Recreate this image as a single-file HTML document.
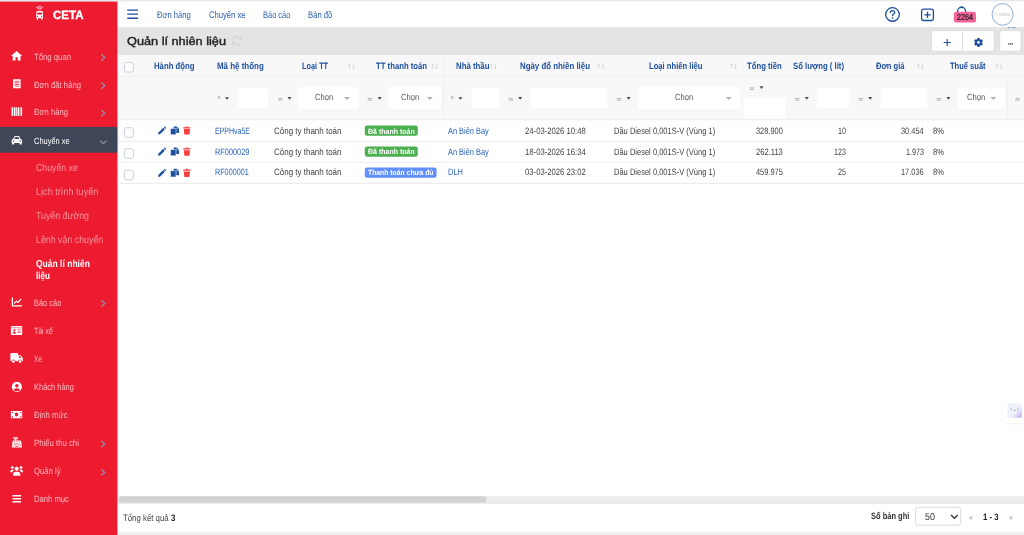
<!DOCTYPE html>
<html lang="vi"><head><meta charset="utf-8"><title>CETA - Quản lí nhiên liệu</title>
<style>
*{margin:0;padding:0;box-sizing:border-box}
html,body{width:1024px;height:535px;overflow:hidden}
body{position:relative;background:#e4e4e4;font-family:"Liberation Sans",sans-serif}
.b{position:absolute}
.t{position:absolute;text-rendering:geometricPrecision;white-space:nowrap;line-height:1;transform-origin:0 0;font-family:"Liberation Sans",sans-serif}
#ov{position:absolute;left:0;top:0;width:1024px;height:535px}

</style></head>
<body>
<svg id="ov" viewBox="0 0 1024 535" width="1024" height="535">
<rect x="0" y="0" width="1024" height="535" fill="#e4e4e4" />
<rect x="0" y="0" width="1024" height="1.6" fill="#e5e8e7" />
<rect x="0" y="1.6" width="117.65" height="533.4" fill="#ec1b30" />
<rect x="0" y="126.9" width="117.65" height="25.8" fill="#3e4658" />
<rect x="117.65" y="1.3" width="906.35" height="26" fill="#fff" />
<rect x="117.65" y="27.3" width="906.35" height="27.7" fill="#e4e4e4" />
<rect x="117.6" y="55" width="1" height="441.2" fill="#eef0f0" />
<rect x="118.4" y="55" width="905.6" height="441.2" fill="#fff" />
<rect x="118.4" y="55" width="905.6" height="64.5" fill="#f8f8f8" />
<rect x="118.4" y="75.8" width="905.6" height="1" fill="#efefef" />
<rect x="118.4" y="119.2" width="905.6" height="1" fill="#ececec" />
<rect x="118.4" y="140.9" width="905.6" height="1" fill="#ececec" />
<rect x="118.4" y="161.8" width="905.6" height="1" fill="#ececec" />
<rect x="118.4" y="182.8" width="905.6" height="1" fill="#e8e8e8" />
<rect x="443" y="55" width="1" height="64" fill="#f1f1f1" />
<rect x="1007.1" y="76" width="1" height="43" fill="#efefef" />
<rect x="117.65" y="496.2" width="906.35" height="6.6" fill="#ececec" />
<rect x="118.5" y="496.2" width="367.8" height="6.6" fill="#d2d2d2" rx="3.3" />
<rect x="117.65" y="502.8" width="906.35" height="0.8" fill="#dcdcdc" />
<rect x="117.65" y="503.6" width="906.35" height="28.3" fill="#fff" />
<rect x="117.65" y="531.9" width="906.35" height="3.1" fill="#f0f0f0" />
<rect x="238" y="88" width="29.8" height="20" fill="#fff" rx="1.5" />
<rect x="298.5" y="87.3" width="60.3" height="21.5" fill="#fff" rx="1.5" />
<rect x="388.5" y="87.3" width="52.5" height="21.5" fill="#fff" rx="1.5" />
<rect x="471.6" y="88" width="27.5" height="20" fill="#fff" rx="1.5" />
<rect x="530.3" y="88" width="76.8" height="20" fill="#fff" rx="1.5" />
<rect x="638.1" y="87.3" width="102.2" height="21.5" fill="#fff" rx="1.5" />
<rect x="743.4" y="97.8" width="41.9" height="20.6" fill="#fff" rx="1.5" />
<rect x="817.1" y="88" width="31.6" height="20" fill="#fff" rx="1.5" />
<rect x="880.8" y="88" width="45.9" height="20" fill="#fff" rx="1.5" />
<rect x="957.6" y="87.4" width="47.4" height="21.6" fill="#fff" rx="1.5" />
<rect x="364.8" y="125.4" width="53" height="10.4" fill="#4cb050" rx="2.3" />
<rect x="364.8" y="146.4" width="53" height="10.4" fill="#4cb050" rx="2.3" />
<rect x="364.8" y="167.4" width="71.8" height="10.4" fill="#6290f8" rx="2.3" />
<rect x="931.6" y="30.6" width="62.5" height="20.7" fill="#fff" rx="2.6" stroke="#d9d9d9" stroke-width=".7"/>
<rect x="962.1" y="31" width="0.8" height="20" fill="#d9d9d9" />
<rect x="999.7" y="30.6" width="21.2" height="20.7" fill="#fff" rx="2.6" stroke="#d9d9d9" stroke-width=".7"/>
<rect x="1008.2" y="43.1" width="1.15" height="1.6" fill="#555" />
<rect x="1009.95" y="43.1" width="1.15" height="1.6" fill="#555" />
<rect x="1011.7" y="43.1" width="1.15" height="1.6" fill="#555" />
<rect x="915.4" y="507.4" width="45.4" height="17.8" fill="#fff" rx="2.6" stroke="#d2d2d2" stroke-width=".8"/>
<defs><linearGradient id="wg" x1="0" y1="0" x2="1" y2="1"><stop offset="0" stop-color="#eef3f8"/><stop offset=".62" stop-color="#eef0f9"/><stop offset="1" stop-color="#c39cee"/></linearGradient><filter id="sh" x="-30%" y="-30%" width="160%" height="160%"><feGaussianBlur stdDeviation="1.2"/></filter></defs>
<rect x="1002.3" y="398.4" width="26" height="25" fill="#000" rx="3" opacity=".07" filter="url(#sh)"/>
<rect x="1002.3" y="397.9" width="26" height="25" fill="#fff" rx="3" />
<rect x="1007.5" y="403.3" width="14.3" height="14.4" fill="url(#wg)" rx="1.5" />
<g fill="#fff">
<g fill="none" stroke="#fff" stroke-width=".8" opacity=".85"><path d="M36.1 7.7 Q39.65 4.9 43.2 7.7"/><path d="M37.3 8.8 Q39.65 6.9 42 8.8"/><path d="M38.5 9.9 Q39.65 9 40.8 9.9"/></g>
<rect x="36.3" y="10.9" width="6.7" height="7.4" rx="1.1"/>
<rect x="36.6" y="18" width="1.5" height="1.7" rx=".4"/>
<rect x="41.2" y="18" width="1.5" height="1.7" rx=".4"/>
<rect x="37.2" y="12.4" width="4.9" height="2.2" rx=".4" fill="#ec1b30"/>
<rect x="37.1" y="16" width="1.1" height=".9" fill="#ec1b30"/>
<rect x="41.1" y="16" width="1.1" height=".9" fill="#ec1b30"/>
</g>
<path fill="#fff" transform="translate(9.875,49.31) scale(.5625)" d="M10 20v-6h4v6h5v-8h3L12 3 2 12h3v8z"/>
<g transform="translate(13.1,79)"><path fill="#fff" d="M0 .4 L.6 0 1.25 .5 1.9 0 2.5 .5 3.1 0 3.75 .5 4.4 0 5 .5 5.6 0 6.25 .5 6.9 0 7.5 .4 V9.1 L6.9 9.5 6.25 9 5.6 9.5 5 9 4.4 9.5 3.75 9 3.1 9.5 2.5 9 1.9 9.5 1.25 9 .6 9.5 0 9.1Z"/>
<g fill="#ec1b30"><rect x="1.5" y="1.9" width="4.5" height=".75"/><rect x="1.5" y="3.5" width="4.5" height=".75"/><rect x="1.5" y="5.1" width="4.5" height=".75"/><rect x="1.5" y="6.7" width="4.5" height=".75"/></g></g>
<g fill="#fff" transform="translate(11.6,107.25)"><rect x="0" y="0" width="1.6" height="8.65"/><rect x="2.3" y="0" width="1.6" height="8.65"/><rect x="4.6" y="0" width="0.8" height="8.65"/><rect x="6" y="0" width="1.6" height="8.65"/><rect x="8.2" y="0" width="0.6" height="8.65"/><rect x="9.2" y="0" width="1.3" height="8.65"/></g>
<g transform="translate(11.6,136)"><path fill="#fff" d="M1.5 3.1 L2.5 .9 Q2.9 0 3.9 0 H6.6 Q7.6 0 8 .9 L9 3.1 Q10.5 3.3 10.5 4.7 V7 H0 V4.7 Q0 3.3 1.5 3.1Z"/>
<rect x=".5" y="6.6" width="2.1" height="1.8" rx=".5" fill="#fff"/><rect x="7.9" y="6.6" width="2.1" height="1.8" rx=".5" fill="#fff"/>
<path fill="#3e4658" d="M2.7 3 L3.4 1.4 Q3.5 1.1 3.9 1.1 H6.6 Q7 1.1 7.1 1.4 L7.8 3Z"/>
<circle cx="2" cy="4.9" r=".75" fill="#3e4658"/><circle cx="8.5" cy="4.9" r=".75" fill="#3e4658"/></g>
<g transform="translate(11.8,297.6)" fill="none" stroke="#fff" stroke-width="1.25" stroke-linecap="round" stroke-linejoin="round"><path d="M.6 .3V8.2H9.8"/><path d="M2.7 5.6 4.6 3.5 6.2 4.9 8.9 1.8" stroke-width="1.15"/></g>
<g transform="translate(10.9,325.9)"><rect width="11.3" height="9.1" rx=".9" fill="#fff"/>
<rect x="0" y="1.7" width="11.3" height=".55" fill="#ec1b30"/>
<circle cx="3.5" cy="4.5" r="1.05" fill="#ec1b30"/><path d="M1.6 7.6 Q1.6 5.9 3.5 5.9 Q5.4 5.9 5.4 7.6Z" fill="#ec1b30"/>
<g fill="#ec1b30"><rect x="6.6" y="3.6" width="3.2" height=".6"/><rect x="6.6" y="5" width="3.2" height=".6"/><rect x="6.6" y="6.4" width="3.2" height=".6"/></g></g>
<g transform="translate(10.4,353.1)"><rect x="0" y="0" width="7.6" height="7.4" rx=".9" fill="#fff"/>
<path fill="#fff" d="M7.6 2.1 H9.7 Q10.1 2.1 10.4 2.4 L12 4.1 Q12.3 4.4 12.3 4.8 V7.8 H7.6Z"/>
<rect x="0" y="6.6" width="12.3" height="1.4" fill="#fff"/>
<path fill="#ec1b30" d="M8.6 3 H9.7 L11.2 4.7 H8.6Z"/>
<circle cx="3" cy="8.3" r="1.95" fill="#ec1b30"/><circle cx="9.6" cy="8.3" r="1.95" fill="#ec1b30"/>
<circle cx="3" cy="8.4" r="1.35" fill="#fff"/><circle cx="9.6" cy="8.4" r="1.35" fill="#fff"/></g>
<g transform="translate(11.8,381.8)"><defs><clipPath id="uc"><circle cx="5.05" cy="5.05" r="4.3"/></clipPath></defs>
<circle cx="5.05" cy="5.05" r="5.05" fill="#fff"/><circle cx="5.05" cy="3.9" r="1.75" fill="#ec1b30"/>
<ellipse cx="5.05" cy="8.9" rx="3.3" ry="2.5" fill="#ec1b30" clip-path="url(#uc)"/></g>
<g transform="translate(10.9,410.9)"><rect width="11.3" height="7.4" rx=".7" fill="#fff"/>
<ellipse cx="5.65" cy="3.7" rx="1.7" ry="2" fill="#ec1b30"/>
<path fill="#ec1b30" d="M1 1 H2.4 Q2.4 2.3 1 2.3Z M10.3 1 H8.9 Q8.9 2.3 10.3 2.3Z M1 6.4 H2.4 Q2.4 5.1 1 5.1Z M10.3 6.4 H8.9 Q8.9 5.1 10.3 5.1Z"/></g>
<g transform="translate(11.8,437)"><rect x="1.6" y="0" width="4.4" height="2.3" rx=".5" fill="#fff"/><rect x="3.1" y="2" width="1.4" height="1.6" fill="#fff"/>
<path fill="#fff" d="M1.6 3.4 H8.5 Q9.1 3.4 9.2 4 L10 7.7 H.1 L.9 4 Q1 3.4 1.6 3.4Z"/>
<rect x="0" y="8.2" width="10.1" height="2.2" rx=".6" fill="#fff"/>
<g fill="#ec1b30"><rect x="2.3" y=".75" width="3" height=".6"/><rect x="2.4" y="4.5" width=".9" height=".7"/><rect x="4.1" y="4.5" width=".9" height=".7"/><rect x="5.8" y="4.5" width=".9" height=".7"/><rect x="7.4" y="4.5" width=".7" height=".7"/>
<rect x="2" y="6" width=".9" height=".7"/><rect x="3.7" y="6" width=".9" height=".7"/><rect x="5.4" y="6" width=".9" height=".7"/><rect x="7.1" y="6" width=".9" height=".7"/><rect x="3.4" y="9" width="3.3" height=".6"/></g></g>
<g transform="translate(10.3,465.6)" fill="#fff"><circle cx="6.35" cy="3.1" r="2.05"/><path d="M2.7 10.1 V9 Q2.7 6.1 5.4 6.1 H7.3 Q10 6.1 10 9 V10.1Z"/>
<circle cx="2" cy="2" r="1.4"/><circle cx="10.7" cy="2" r="1.4"/>
<path d="M0 6.6 V6 Q0 4.1 1.6 4.1 H2.6 Q3.3 4.1 3.7 4.6 Q2.1 5.4 1.9 6.6Z"/><path d="M12.7 6.6 V6 Q12.7 4.1 11.1 4.1 H10.1 Q9.4 4.1 9 4.6 Q10.6 5.4 10.8 6.6Z"/></g>
<g transform="translate(12.4,495)" fill="#fff"><rect width="8.7" height="1.4" rx=".5"/><rect y="3" width="8.7" height="1.4" rx=".5"/><rect y="6" width="8.7" height="1.4" rx=".5"/></g>
<path d="M101.2 54.30 L104.8 57.50 L101.2 60.70" fill="none" stroke="#8f939d" stroke-width="1.3"/>
<path d="M101.2 82.30 L104.8 85.50 L101.2 88.70" fill="none" stroke="#8f939d" stroke-width="1.3"/>
<path d="M101.2 110.10 L104.8 113.30 L101.2 116.50" fill="none" stroke="#8f939d" stroke-width="1.3"/>
<path d="M101.2 300.30 L104.8 303.50 L101.2 306.70" fill="none" stroke="#8f939d" stroke-width="1.3"/>
<path d="M101.2 440.90 L104.8 444.10 L101.2 447.30" fill="none" stroke="#8f939d" stroke-width="1.3"/>
<path d="M101.2 469.20 L104.8 472.40 L101.2 475.60" fill="none" stroke="#8f939d" stroke-width="1.3"/>
<path d="M100 140.6 L103.3 143.7 L106.6 140.6" fill="none" stroke="#8c95a4" stroke-width="1.1"/>
<g fill="#1d4f9f"><rect x="127.2" y="9.4" width="10.9" height="1.35" rx=".3"/><rect x="127.2" y="13.5" width="10.9" height="1.35" rx=".3"/><rect x="127.2" y="17.6" width="10.9" height="1.35" rx=".3"/></g>
<circle cx="892.5" cy="14.45" r="6.8" fill="none" stroke="#1d4f9f" stroke-width="1.3"/>
<path d="M890.3 12.7 Q890.3 10.6 892.5 10.6 Q894.7 10.6 894.7 12.5 Q894.7 13.6 893.5 14.2 Q892.5 14.7 892.5 15.9" fill="none" stroke="#1d4f9f" stroke-width="1.3"/><circle cx="892.5" cy="17.9" r=".8" fill="#1d4f9f"/>
<rect x="921.6" y="9.1" width="11.8" height="11.4" rx="1.8" fill="none" stroke="#1d4f9f" stroke-width="1.3"/><path d="M924.4 14.8H930.6M927.5 11.7V17.9" stroke="#1d4f9f" stroke-width="1.3" fill="none"/>
<path d="M957.6 13 V11.2 A4 4 0 0 1 965.6 11.2 V13" fill="none" stroke="#1d4f9f" stroke-width="1.4"/><path d="M960.6 7.2 L961.6 5.8 L962.6 7.2Z" fill="#1d4f9f"/>
<rect x="953.8" y="11.8" width="22.2" height="10.6" rx="2.5" fill="#f4649a"/>
<ellipse cx="1002.6" cy="14.4" rx="10.55" ry="10.85" fill="#fff" stroke="#6f95cc" stroke-width=".8"/>
<rect x="994.7" y="13.2" width="3" height="2.5" fill="none" stroke="#d4d4d4" stroke-width=".45"/><text transform="translate(999.1,15.5) scale(.29)" font-family="Liberation Sans, sans-serif" font-size="9" font-weight="700" fill="#d2d2d2" textLength="37">NO IMAGE</text>
<rect x="1008" y="27.2" width="2.6" height=".9" fill="#7a9acb"/><rect x="1012" y="27.2" width="3.6" height=".9" fill="#7a9acb"/>
<path d="M943.7 42.5H950.7M947.2 39V46" stroke="#1d4f9f" stroke-width="1.1" fill="none"/>
<g fill="#1d4f9f"><rect x="977.35" y="37.95" width="2.3" height="9" rx=".4" transform="rotate(0 978.5 42.45)"/><rect x="977.35" y="37.95" width="2.3" height="9" rx=".4" transform="rotate(60 978.5 42.45)"/><rect x="977.35" y="37.95" width="2.3" height="9" rx=".4" transform="rotate(120 978.5 42.45)"/><circle cx="978.5" cy="42.45" r="3.35"/></g><circle cx="978.5" cy="42.45" r="1.35" fill="#fff"/>
<g fill="none" stroke="#d4d4d4" stroke-width="1.3"><path d="M233 39.6 A4.1 4.1 0 0 1 240.4 38.6"/><path d="M240.8 42.2 A4.1 4.1 0 0 1 233.4 43.2"/></g><path d="M241.9 36.2 V39.8 H238.3Z M231.9 45.6 V42 H235.5Z" fill="#d4d4d4"/>
<rect x="124.4" y="62.4" width="9" height="9.6" rx="2.2" fill="#fff" stroke="#c4cbd8" stroke-width=".9"/>
<rect x="124.4" y="127.7" width="9" height="9.6" rx="2.2" fill="#fff" stroke="#c4cbd8" stroke-width=".9"/>
<rect x="124.4" y="148.7" width="9" height="9.6" rx="2.2" fill="#fff" stroke="#c4cbd8" stroke-width=".9"/>
<rect x="124.4" y="170.2" width="9" height="9.6" rx="2.2" fill="#fff" stroke="#c4cbd8" stroke-width=".9"/>
<g stroke="#c6c6c6" stroke-width=".6" fill="none"><path d="M349.5 68.8V64.1M348.4 65.3L349.5 64.1L350.6 65.3"/><path d="M353.6 64V68.7M352.5 67.5L353.6 68.7L354.70000000000005 67.5"/></g>
<g stroke="#c6c6c6" stroke-width=".6" fill="none"><path d="M432.75 68.8V64.1M431.65 65.3L432.75 64.1L433.85 65.3"/><path d="M436.85 64V68.7M435.75 67.5L436.85 68.7L437.95000000000005 67.5"/></g>
<g stroke="#c6c6c6" stroke-width=".6" fill="none"><path d="M491.25 68.8V64.1M490.15 65.3L491.25 64.1L492.35 65.3"/><path d="M495.35 64V68.7M494.25 67.5L495.35 68.7L496.45000000000005 67.5"/></g>
<g stroke="#c6c6c6" stroke-width=".6" fill="none"><path d="M598.75 68.8V64.1M597.65 65.3L598.75 64.1L599.85 65.3"/><path d="M602.85 64V68.7M601.75 67.5L602.85 68.7L603.95 67.5"/></g>
<g stroke="#c6c6c6" stroke-width=".6" fill="none"><path d="M731.5 68.8V64.1M730.4 65.3L731.5 64.1L732.6 65.3"/><path d="M735.6 64V68.7M734.5 67.5L735.6 68.7L736.7 67.5"/></g>
<g stroke="#c6c6c6" stroke-width=".6" fill="none"><path d="M918.4 68.8V64.1M917.3 65.3L918.4 64.1L919.5 65.3"/><path d="M922.5 64V68.7M921.4 67.5L922.5 68.7L923.6 67.5"/></g>
<g stroke="#c6c6c6" stroke-width=".6" fill="none"><path d="M996.9 68.8V64.1M995.8 65.3L996.9 64.1L998.0 65.3"/><path d="M1001.0 64V68.7M999.9 67.5L1001.0 68.7L1002.1 67.5"/></g>
<path d="M217.5 96L220.5 98.8M220.5 96L217.5 98.8" stroke="#8a8a8a" stroke-width=".7" fill="none"/>
<path d="M225 97.2H229L227.0 99.8Z" fill="#4a4a4a"/>
<path d="M278 98.55H282.3M278 100.1H282.3" stroke="#999" stroke-width=".7" fill="none"/>
<path d="M287.5 97.1H291.5L289.5 99.69999999999999Z" fill="#4a4a4a"/>
<path d="M367.75 98.55H372.05M367.75 100.1H372.05" stroke="#999" stroke-width=".7" fill="none"/>
<path d="M377.7 97.1H381.7L379.7 99.69999999999999Z" fill="#4a4a4a"/>
<path d="M450.7 96L453.7 98.8M453.7 96L450.7 98.8" stroke="#8a8a8a" stroke-width=".7" fill="none"/>
<path d="M458.4 97.2H462.4L460.4 99.8Z" fill="#4a4a4a"/>
<path d="M508.75 98.55H513.05M508.75 100.1H513.05" stroke="#999" stroke-width=".7" fill="none"/>
<path d="M518.2 97.1H522.2L520.2 99.69999999999999Z" fill="#4a4a4a"/>
<path d="M616.9 98.55H621.1999999999999M616.9 100.1H621.1999999999999" stroke="#999" stroke-width=".7" fill="none"/>
<path d="M626.6 97.1H630.6L628.6 99.69999999999999Z" fill="#4a4a4a"/>
<path d="M749.75 87.85H754.05M749.75 89.39999999999999H754.05" stroke="#999" stroke-width=".7" fill="none"/>
<path d="M759.5 86.3H763.5L761.5 88.89999999999999Z" fill="#4a4a4a"/>
<path d="M795.1 98.55H799.4M795.1 100.1H799.4" stroke="#999" stroke-width=".7" fill="none"/>
<path d="M804.8 97.1H808.8L806.8 99.69999999999999Z" fill="#4a4a4a"/>
<path d="M858.5 98.55H862.8M858.5 100.1H862.8" stroke="#999" stroke-width=".7" fill="none"/>
<path d="M868.2 97.1H872.2L870.2 99.69999999999999Z" fill="#4a4a4a"/>
<path d="M936.7 98.55H941.0M936.7 100.1H941.0" stroke="#999" stroke-width=".7" fill="none"/>
<path d="M946.4 97.1H950.4L948.4 99.69999999999999Z" fill="#4a4a4a"/>
<path d="M1015.3 98.55H1019.5999999999999M1015.3 100.1H1019.5999999999999" stroke="#999" stroke-width=".7" fill="none"/>
<path d="M344 96.9H350L347.0 100.0Z" fill="#b2b2b2"/>
<path d="M426.9 96.9H432.9L429.9 100.0Z" fill="#b2b2b2"/>
<path d="M725.6 96.9H731.6L728.6 100.0Z" fill="#b2b2b2"/>
<path d="M990.3 96.9H996.3L993.3 100.0Z" fill="#b2b2b2"/>
<g transform="translate(158,126.5)" fill="#1d4f9f"><path d="M0 8.1 L.5 5.9 L5.2 1.2 L6.9 2.9 L2.2 7.6Z"/><path d="M5.8 .6 L6.3 .1 Q6.6 -.2 7 .2 L8 1.2 Q8.3 1.6 8 1.9 L7.5 2.4Z"/></g>
<g transform="translate(170.6,126.5)" fill="#1d4f9f"><path d="M3.5 0 H6.3 L8.4 2.1 V5.9 Q8.4 6.4 7.9 6.4 H3.5 Q3 6.4 3 5.9 V.5 Q3 0 3.5 0Z"/><path d="M6.2 .1 V2.2 H8.3" fill="none" stroke="#fff" stroke-width=".45"/><rect x="-.1" y="1.9" width="5.5" height="6.3" rx=".6" stroke="#fff" stroke-width=".55"/></g>
<g transform="translate(183.2,126.5)" fill="#f6403f"><rect x="2.4" y="0" width="2.6" height="1" rx=".3"/><rect x="0" y=".7" width="7.4" height="1.3" rx=".4"/><path d="M.6 2.6 H6.8 L6.4 7.5 Q6.35 8.1 5.7 8.1 H1.7 Q1.05 8.1 1 7.5Z"/></g>
<g transform="translate(158,147.6)" fill="#1d4f9f"><path d="M0 8.1 L.5 5.9 L5.2 1.2 L6.9 2.9 L2.2 7.6Z"/><path d="M5.8 .6 L6.3 .1 Q6.6 -.2 7 .2 L8 1.2 Q8.3 1.6 8 1.9 L7.5 2.4Z"/></g>
<g transform="translate(170.6,147.6)" fill="#1d4f9f"><path d="M3.5 0 H6.3 L8.4 2.1 V5.9 Q8.4 6.4 7.9 6.4 H3.5 Q3 6.4 3 5.9 V.5 Q3 0 3.5 0Z"/><path d="M6.2 .1 V2.2 H8.3" fill="none" stroke="#fff" stroke-width=".45"/><rect x="-.1" y="1.9" width="5.5" height="6.3" rx=".6" stroke="#fff" stroke-width=".55"/></g>
<g transform="translate(183.2,147.6)" fill="#f6403f"><rect x="2.4" y="0" width="2.6" height="1" rx=".3"/><rect x="0" y=".7" width="7.4" height="1.3" rx=".4"/><path d="M.6 2.6 H6.8 L6.4 7.5 Q6.35 8.1 5.7 8.1 H1.7 Q1.05 8.1 1 7.5Z"/></g>
<g transform="translate(158,168.8)" fill="#1d4f9f"><path d="M0 8.1 L.5 5.9 L5.2 1.2 L6.9 2.9 L2.2 7.6Z"/><path d="M5.8 .6 L6.3 .1 Q6.6 -.2 7 .2 L8 1.2 Q8.3 1.6 8 1.9 L7.5 2.4Z"/></g>
<g transform="translate(170.6,168.8)" fill="#1d4f9f"><path d="M3.5 0 H6.3 L8.4 2.1 V5.9 Q8.4 6.4 7.9 6.4 H3.5 Q3 6.4 3 5.9 V.5 Q3 0 3.5 0Z"/><path d="M6.2 .1 V2.2 H8.3" fill="none" stroke="#fff" stroke-width=".45"/><rect x="-.1" y="1.9" width="5.5" height="6.3" rx=".6" stroke="#fff" stroke-width=".55"/></g>
<g transform="translate(183.2,168.8)" fill="#f6403f"><rect x="2.4" y="0" width="2.6" height="1" rx=".3"/><rect x="0" y=".7" width="7.4" height="1.3" rx=".4"/><path d="M.6 2.6 H6.8 L6.4 7.5 Q6.35 8.1 5.7 8.1 H1.7 Q1.05 8.1 1 7.5Z"/></g>
<path d="M951 515 L954.3 518.3 L957.6 515" fill="none" stroke="#333" stroke-width="1.3"/>
<g stroke="#7a7a88" stroke-width=".45" fill="none"><path d="M1010.3 408.2 L1011.8 409.2 L1010.3 410.3"/><path d="M1018.7 408.2 L1017.2 409.2 L1018.7 410.3"/><path d="M1013.6 410.3 H1015.4" stroke-width=".7"/></g>
</svg>

<span class="t" style="left:53.30px;top:9px;font-size:12px;font-weight:700;color:#fff;transform:scaleX(0.9597);-webkit-text-stroke:.35px #fff;">CETA</span>
<span class="t" style="left:156.60px;top:11px;font-size:9.5px;font-weight:400;color:#2b5fae;transform:scaleX(0.8018);">Đơn hàng</span>
<span class="t" style="left:208.80px;top:11px;font-size:9.5px;font-weight:400;color:#2b5fae;transform:scaleX(0.8036);">Chuyến xe</span>
<span class="t" style="left:263.30px;top:11px;font-size:9.5px;font-weight:400;color:#2b5fae;transform:scaleX(0.7857);">Báo cáo</span>
<span class="t" style="left:308.40px;top:11px;font-size:9.5px;font-weight:400;color:#2b5fae;transform:scaleX(0.8100);">Bản đồ</span>
<span class="t" style="left:126.75px;top:37px;font-size:11.4px;font-weight:400;color:#222;transform:scaleX(1.1167);-webkit-text-stroke:.4px #222;">Quản lí nhiên liệu</span>
<span class="t" style="left:34.10px;top:53px;font-size:9.1px;font-weight:400;color:rgba(255,255,255,0.68);transform:scaleX(0.8509);">Tổng quan</span>
<span class="t" style="left:34.10px;top:81px;font-size:9.1px;font-weight:400;color:rgba(255,255,255,0.68);transform:scaleX(0.8466);">Đơn đặt hàng</span>
<span class="t" style="left:34.10px;top:108px;font-size:9.1px;font-weight:400;color:rgba(255,255,255,0.68);transform:scaleX(0.8400);">Đơn hàng</span>
<span class="t" style="left:34.10px;top:299px;font-size:9.1px;font-weight:400;color:rgba(255,255,255,0.68);transform:scaleX(0.8180);">Báo cáo</span>
<span class="t" style="left:34.10px;top:327px;font-size:9.1px;font-weight:400;color:rgba(255,255,255,0.68);transform:scaleX(0.7632);">Tài xế</span>
<span class="t" style="left:34.10px;top:355px;font-size:9.1px;font-weight:400;color:rgba(255,255,255,0.68);transform:scaleX(0.7461);">Xe</span>
<span class="t" style="left:34.10px;top:383px;font-size:9.1px;font-weight:400;color:rgba(255,255,255,0.68);transform:scaleX(0.8219);">Khách hàng</span>
<span class="t" style="left:34.10px;top:411px;font-size:9.1px;font-weight:400;color:rgba(255,255,255,0.68);transform:scaleX(0.8491);">Định mức</span>
<span class="t" style="left:34.10px;top:439px;font-size:9.1px;font-weight:400;color:rgba(255,255,255,0.68);transform:scaleX(0.8540);">Phiếu thu chi</span>
<span class="t" style="left:34.10px;top:467px;font-size:9.1px;font-weight:400;color:rgba(255,255,255,0.68);transform:scaleX(0.8487);">Quản lý</span>
<span class="t" style="left:34.10px;top:495px;font-size:9.1px;font-weight:400;color:rgba(255,255,255,0.68);transform:scaleX(0.8419);">Danh mục</span>
<span class="t" style="left:34.00px;top:137px;font-size:9.1px;font-weight:400;color:#fff;transform:scaleX(0.8187);">Chuyến xe</span>
<span class="t" style="left:36.10px;top:164px;font-size:10.2px;font-weight:400;color:rgba(255,255,255,0.50);transform:scaleX(0.8570);">Chuyến xe</span>
<span class="t" style="left:36.10px;top:188px;font-size:10.2px;font-weight:400;color:rgba(255,255,255,0.50);transform:scaleX(0.8958);">Lịch trình tuyến</span>
<span class="t" style="left:36.10px;top:212px;font-size:10.2px;font-weight:400;color:rgba(255,255,255,0.50);transform:scaleX(0.8651);">Tuyến đường</span>
<span class="t" style="left:36.10px;top:236px;font-size:10.2px;font-weight:400;color:rgba(255,255,255,0.50);transform:scaleX(0.8659);">Lệnh vận chuyển</span>
<span class="t" style="left:36.10px;top:260px;font-size:10.2px;font-weight:700;color:#fff;transform:scaleX(0.8353);">Quản lí nhiên</span>
<span class="t" style="left:36.10px;top:272px;font-size:10.2px;font-weight:700;color:#fff;transform:scaleX(0.7915);">liệu</span>
<span class="t" style="left:153.60px;top:62px;font-size:9.3px;font-weight:700;color:#1d4f9f;transform:scaleX(0.8363);">Hành động</span>
<span class="t" style="left:216.75px;top:62px;font-size:9.3px;font-weight:700;color:#1d4f9f;transform:scaleX(0.8539);">Mã hệ thống</span>
<span class="t" style="left:301.60px;top:62px;font-size:9.3px;font-weight:700;color:#1d4f9f;transform:scaleX(0.7894);">Loại TT</span>
<span class="t" style="left:376.00px;top:62px;font-size:9.3px;font-weight:700;color:#1d4f9f;transform:scaleX(0.8315);">TT thanh toán</span>
<span class="t" style="left:455.60px;top:62px;font-size:9.3px;font-weight:700;color:#1d4f9f;transform:scaleX(0.8421);">Nhà thầu</span>
<span class="t" style="left:520.00px;top:62px;font-size:9.3px;font-weight:700;color:#1d4f9f;transform:scaleX(0.8469);">Ngày đổ nhiên liệu</span>
<span class="t" style="left:648.75px;top:62px;font-size:9.3px;font-weight:700;color:#1d4f9f;transform:scaleX(0.8219);">Loại nhiên liệu</span>
<span class="t" style="left:747.10px;top:62px;font-size:9.3px;font-weight:700;color:#1d4f9f;transform:scaleX(0.8320);">Tổng tiền</span>
<span class="t" style="left:793.40px;top:62px;font-size:9.3px;font-weight:700;color:#1d4f9f;transform:scaleX(0.8310);">Số lượng ( lít)</span>
<span class="t" style="left:875.50px;top:62px;font-size:9.3px;font-weight:700;color:#1d4f9f;transform:scaleX(0.8136);">Đơn giá</span>
<span class="t" style="left:950.40px;top:62px;font-size:9.3px;font-weight:700;color:#1d4f9f;transform:scaleX(0.8108);">Thuế suất</span>
<span class="t" style="left:314.75px;top:93px;font-size:8.8px;font-weight:400;color:#555;transform:scaleX(0.8606);">Chọn</span>
<span class="t" style="left:400.90px;top:93px;font-size:8.8px;font-weight:400;color:#555;transform:scaleX(0.8606);">Chọn</span>
<span class="t" style="left:674.75px;top:93px;font-size:8.8px;font-weight:400;color:#555;transform:scaleX(0.8606);">Chọn</span>
<span class="t" style="left:966.80px;top:93px;font-size:8.8px;font-weight:400;color:#555;transform:scaleX(0.8606);">Chọn</span>
<span class="t" style="left:215.20px;top:127px;font-size:9.2px;font-weight:400;color:#2a63b6;transform:scaleX(0.7614);">EPPHva5E</span>
<span class="t" style="left:274.30px;top:127px;font-size:9.2px;font-weight:400;color:#3d3d3d;transform:scaleX(0.8692);">Công ty thanh toán</span>
<span class="t" style="left:448.30px;top:127px;font-size:9.2px;font-weight:400;color:#2a63b6;transform:scaleX(0.8067);">An Biên Bay</span>
<span class="t" style="left:524.60px;top:127px;font-size:9.2px;font-weight:400;color:#3d3d3d;transform:scaleX(0.8381);">24-03-2026 10:48</span>
<span class="t" style="left:614.30px;top:127px;font-size:9.2px;font-weight:400;color:#3d3d3d;transform:scaleX(0.8188);">Dầu Diesel 0,001S-V (Vùng 1)</span>
<span class="t" style="left:755.60px;top:127px;font-size:9.2px;font-weight:400;color:#3d3d3d;transform:scaleX(0.8068);">328.900</span>
<span class="t" style="left:838.20px;top:127px;font-size:9.2px;font-weight:400;color:#3d3d3d;transform:scaleX(0.7817);">10</span>
<span class="t" style="left:901.10px;top:127px;font-size:9.2px;font-weight:400;color:#3d3d3d;transform:scaleX(0.8040);">30.454</span>
<span class="t" style="left:933.20px;top:127px;font-size:9.2px;font-weight:400;color:#3d3d3d;transform:scaleX(0.8282);">8%</span>
<span class="t" style="left:215.20px;top:148px;font-size:9.2px;font-weight:400;color:#2a63b6;transform:scaleX(0.8017);">RF000029</span>
<span class="t" style="left:274.30px;top:148px;font-size:9.2px;font-weight:400;color:#3d3d3d;transform:scaleX(0.8692);">Công ty thanh toán</span>
<span class="t" style="left:448.30px;top:148px;font-size:9.2px;font-weight:400;color:#2a63b6;transform:scaleX(0.8067);">An Biên Bay</span>
<span class="t" style="left:524.60px;top:148px;font-size:9.2px;font-weight:400;color:#3d3d3d;transform:scaleX(0.8381);">18-03-2026 16:34</span>
<span class="t" style="left:614.30px;top:148px;font-size:9.2px;font-weight:400;color:#3d3d3d;transform:scaleX(0.8188);">Dầu Diesel 0,001S-V (Vùng 1)</span>
<span class="t" style="left:755.60px;top:148px;font-size:9.2px;font-weight:400;color:#3d3d3d;transform:scaleX(0.8238);">262.113</span>
<span class="t" style="left:834.30px;top:148px;font-size:9.2px;font-weight:400;color:#3d3d3d;transform:scaleX(0.7756);">123</span>
<span class="t" style="left:905.60px;top:148px;font-size:9.2px;font-weight:400;color:#3d3d3d;transform:scaleX(0.7870);">1.973</span>
<span class="t" style="left:933.20px;top:148px;font-size:9.2px;font-weight:400;color:#3d3d3d;transform:scaleX(0.8282);">8%</span>
<span class="t" style="left:215.20px;top:168px;font-size:9.2px;font-weight:400;color:#2a63b6;transform:scaleX(0.7854);">RF000001</span>
<span class="t" style="left:274.30px;top:168px;font-size:9.2px;font-weight:400;color:#3d3d3d;transform:scaleX(0.8692);">Công ty thanh toán</span>
<span class="t" style="left:448.30px;top:168px;font-size:9.2px;font-weight:400;color:#2a63b6;transform:scaleX(0.8102);">DLH</span>
<span class="t" style="left:524.60px;top:168px;font-size:9.2px;font-weight:400;color:#3d3d3d;transform:scaleX(0.8381);">03-03-2026 23:02</span>
<span class="t" style="left:614.30px;top:168px;font-size:9.2px;font-weight:400;color:#3d3d3d;transform:scaleX(0.8188);">Dầu Diesel 0,001S-V (Vùng 1)</span>
<span class="t" style="left:755.60px;top:168px;font-size:9.2px;font-weight:400;color:#3d3d3d;transform:scaleX(0.8068);">459.975</span>
<span class="t" style="left:838.20px;top:168px;font-size:9.2px;font-weight:400;color:#3d3d3d;transform:scaleX(0.7817);">25</span>
<span class="t" style="left:901.10px;top:168px;font-size:9.2px;font-weight:400;color:#3d3d3d;transform:scaleX(0.8040);">17.036</span>
<span class="t" style="left:933.20px;top:168px;font-size:9.2px;font-weight:400;color:#3d3d3d;transform:scaleX(0.8282);">8%</span>
<span class="t" style="left:367.90px;top:128px;font-size:7.5px;font-weight:700;color:#fff;transform:scaleX(0.9340);">Đã thanh toán</span>
<span class="t" style="left:367.90px;top:148px;font-size:7.5px;font-weight:700;color:#fff;transform:scaleX(0.9340);">Đã thanh toán</span>
<span class="t" style="left:367.90px;top:169px;font-size:7.5px;font-weight:700;color:#fff;transform:scaleX(0.9083);">Thanh toán chưa đủ</span>
<span class="t" style="left:123.10px;top:514px;font-size:9.3px;font-weight:400;color:#444;transform:scaleX(0.8401);">Tổng kết quả</span>
<span class="t" style="left:171.00px;top:514px;font-size:9.3px;font-weight:700;color:#222;transform:scaleX(0.8508);">3</span>
<span class="t" style="left:871.00px;top:512px;font-size:9.3px;font-weight:700;color:#333;transform:scaleX(0.8061);">Số bản ghi</span>
<span class="t" style="left:925.40px;top:513px;font-size:10px;font-weight:400;color:#333;transform:scaleX(0.8989);">50</span>
<span class="t" style="left:983.00px;top:513px;font-size:9.3px;font-weight:700;color:#222;transform:scaleX(0.8437);">1 - 3</span>
<span class="t" style="left:968.70px;top:514px;font-size:8px;font-weight:400;color:#999;transform:scaleX(0.8533);">«</span>
<span class="t" style="left:1009.30px;top:514px;font-size:8px;font-weight:400;color:#999;transform:scaleX(0.8533);">»</span>
<span class="t" style="left:957.30px;top:13px;font-size:8.6px;font-weight:400;color:#222;transform:scaleX(0.8366);-webkit-text-stroke:.2px #222;">2264</span>
</body></html>
